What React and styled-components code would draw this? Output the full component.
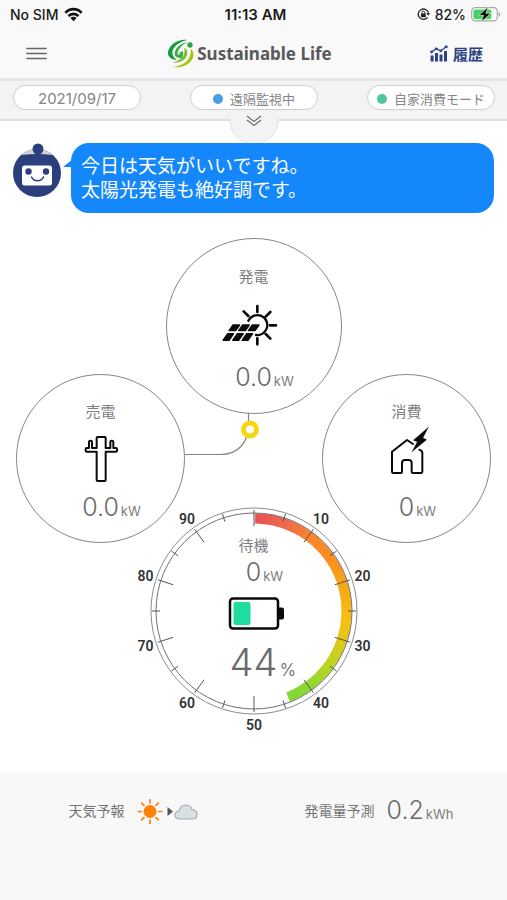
import React from "react";
import styled, { createGlobalStyle } from "styled-components";

const GlobalStyle = createGlobalStyle`
  *, *::before, *::after { box-sizing: border-box; }
  body {
    margin: 0;
    background: #fff;
    color: #6a6a6a;
    font-family: Inter, "Noto Sans CJK JP", sans-serif;
  }
  button { font: inherit; color: inherit; cursor: pointer; }
  svg { display: block; flex: none; }
`;

const Screen = styled.div`
  display: flex;
  flex-direction: column;
  min-height: 100vh;
`;

const StatusBar = styled.div`
  display: grid;
  grid-template-columns: 1fr auto 1fr;
  align-items: center;
  height: 28px;
  padding: 0 6px 0 10px;
  background: #f9f9f9;
  color: #1a1a1a;
  font-size: 14px;
  font-weight: 500;
`;

const StatusGroup = styled.div`
  display: flex;
  align-items: center;
  justify-content: ${(p) => (p.$end ? "flex-end" : "flex-start")};
  gap: ${(p) => (p.$end ? "5px" : "6px")};
`;

const Clock = styled.time`
  font-size: 15px;
  font-weight: 600;
`;

const Header = styled.header`
  display: grid;
  grid-template-columns: 1fr auto 1fr;
  align-items: center;
  height: 53px;
  padding: 0 24px 0 20px;
  background: #f9f9f9;
  border-bottom: 3px solid #e7e7e7;
`;

const MenuButton = styled.button`
  justify-self: start;
  padding: 6px;
  border: 0;
  background: none;
`;

const Brand = styled.h1`
  display: flex;
  align-items: center;
  gap: 3px;
  margin: 0;
  padding-right: 4px;
  color: #58595b;
  font-family: "Noto Sans", sans-serif;
  font-size: 17px;
  font-weight: 700;
  white-space: nowrap;
`;

const HistoryLink = styled.a`
  display: flex;
  align-items: center;
  justify-self: end;
  gap: 5px;
  color: #2d4283;
  font-size: 15px;
  font-weight: 700;
  text-decoration: none;
`;

const ModeBar = styled.div`
  position: relative;
  display: flex;
  justify-content: space-between;
  height: 40px;
  padding: 4px 12px 0 13px;
  background: #f3f3f3;
  border-bottom: 2px solid #dfdfdf;
`;

const Pill = styled.button`
  display: flex;
  align-items: center;
  justify-content: center;
  gap: 7px;
  width: 128px;
  height: 25px;
  padding: 2px 0 0;
  border: 1px solid #cfcfcf;
  border-radius: 13px;
  background: #fff;
  color: #858585;
  font-size: ${(p) => (p.$date ? "15px" : "13px")};
  font-weight: 400;
  white-space: nowrap;
`;

const Dot = styled.span`
  width: 10px;
  height: 10px;
  border-radius: 50%;
  background: ${(p) => p.$color};
`;

const Drawer = styled.button`
  position: absolute;
  top: 29px;
  left: 50%;
  transform: translateX(-50%);
  padding: 0;
  border: 0;
  background: none;
`;

const Chat = styled.section`
  display: flex;
  align-items: flex-start;
  padding: 22px 13px 0;
`;

const Bubble = styled.p`
  position: relative;
  flex: 1;
  min-height: 70px;
  margin: 0 0 0 10px;
  padding: 12px 10px 10px;
  border-radius: 18px;
  background: #1487fb;
  color: #fff;
  font-family: "Liberation Sans", "Noto Sans CJK JP", sans-serif;
  font-size: 19px;
  font-weight: 400;
  line-height: 24px;

  &::before {
    content: "";
    position: absolute;
    left: -8px;
    top: 16px;
    border-right: 10px solid #1487fb;
    border-top: 8px solid transparent;
  }
`;

const Diagram = styled.main`
  display: flex;
  flex-direction: column;
  align-items: center;
  padding: 25px 16px 36px;
`;

const Node = styled.section`
  display: flex;
  flex: none;
  flex-direction: column;
  align-items: center;
  justify-content: center;
  width: ${(p) => (p.$large ? "176px" : "169px")};
  height: ${(p) => (p.$large ? "176px" : "169px")};
  padding-top: 11px;
  border: 1px solid #858585;
  border-radius: 50%;
`;

const NodeTitle = styled.h2`
  margin: 0;
  color: #808080;
  font-size: 15px;
  font-weight: 400;
  line-height: 20px;
`;

const NodeIcon = styled.div`
  display: flex;
  align-items: center;
  height: 44px;
  margin: ${(p) => (p.$large ? "16px 0 14px" : "15px 0 10px")};
`;

const Reading = styled.p`
  display: grid;
  grid-template-columns: 1fr auto 1fr;
  align-items: baseline;
  width: 120px;
  margin: 0;
  font-size: ${(p) => (p.$big ? "38px" : "25px")};
  font-weight: 300;
  line-height: ${(p) => (p.$big ? "44px" : "32px")};
`;

const Amount = styled.span`
  grid-column: 2;
`;

const Unit = styled.span`
  padding-left: 2px;
  color: #7c7c7c;
  font-size: ${(p) => (p.$big ? "17px" : "13px")};
  font-weight: 400;
`;

const SideRow = styled.div`
  display: flex;
  align-self: stretch;
  justify-content: space-between;
  margin-top: -40px;
`;

const Link = styled.div`
  flex: 1;
`;

const Gauge = styled.section`
  display: grid;
  justify-items: center;
  margin-top: -57px;

  > * { grid-area: 1 / 1; }
`;

const GaugeContent = styled.div`
  display: flex;
  flex-direction: column;
  align-items: center;
  padding-top: 50px;

  svg { margin: 5px 0 10px; }
`;

const Forecast = styled.footer`
  display: flex;
  flex: 1;
  align-items: flex-start;
  justify-content: space-around;
  padding: 24px 0 0 15px;
  background: #f8f8f8;
`;

const ForecastItem = styled.section`
  display: flex;
  align-items: center;
  gap: 12px;
  height: 32px;
`;

const ForecastTitle = styled.h2`
  margin: 0;
  padding-bottom: 4px;
  color: #747474;
  font-size: 14px;
  font-weight: 400;
`;

const ForecastValue = styled.p`
  margin: 0;
  font-size: 25px;
  font-weight: 300;
  line-height: 32px;
`;

const CENTER = 125;
const at = (percent, r) => {
  const a = (percent / 100) * Math.PI * 2;
  return [CENTER + r * Math.sin(a), CENTER - r * Math.cos(a)];
};

const STOPS = [
  [0, [236, 80, 82]],
  [5, [238, 105, 76]],
  [10, [249, 134, 44]],
  [15, [251, 143, 34]],
  [20, [245, 168, 20]],
  [26, [251, 189, 18]],
  [30, [222, 201, 26]],
  [35, [182, 213, 34]],
  [40, [139, 216, 52]],
  [50, [110, 222, 66]],
];

const colorAt = (percent) => {
  const i = Math.max(1, STOPS.findIndex(([p]) => p >= percent));
  const [p0, c0] = STOPS[i - 1];
  const [p1, c1] = STOPS[i];
  const t = (percent - p0) / (p1 - p0);
  return `rgb(${c0.map((v, k) => Math.round(v + (c1[k] - v) * t)).join(",")})`;
};

function Dial({ level }) {
  const segments = Array.from({ length: level }, (_, i) => {
    const [x0, y0] = at(i === 0 ? 0.2 : i, 92.5);
    const [x1, y1] = at(Math.min(i + 1.3, level), 92.5);
    return <path key={i} d={`M${x0} ${y0}A92.5 92.5 0 0 1 ${x1} ${y1}`} stroke={colorAt(i)} />;
  });
  const ticks = Array.from({ length: 20 }, (_, i) => {
    const major = i % 2 === 0;
    const [x0, y0] = at(i * 5, major ? 101 : 102);
    const [x1, y1] = at(i * 5, major ? 85 : 94);
    return <line key={i} x1={x0} y1={y0} x2={x1} y2={y1} />;
  });
  const labels = [10, 20, 30, 40, 50, 60, 70, 80, 90].map((n) => {
    const [x, y] = at(n, 114);
    return <text key={n} x={x} y={y + 5}>{n}</text>;
  });
  return (
    <svg width="250" height="250" viewBox="0 0 250 250" role="img" aria-label={`${level}%`}>
      <g fill="none" strokeWidth="10">{segments}</g>
      <circle cx={CENTER} cy={CENTER} r="103" fill="none" stroke="#8c8c8c" />
      <circle cx={CENTER} cy={CENTER} r="98" fill="none" stroke="#707070" />
      <g stroke="#555">{ticks}</g>
      <g fill="#333" fontFamily="Roboto, sans-serif" fontSize="14" fontWeight="600" textAnchor="middle">{labels}</g>
    </svg>
  );
}

const WifiIcon = () => (
  <svg width="19" height="15" viewBox="0 0 19 15" fill="none" stroke="#111" strokeWidth="2.6">
    <path d="M1.4 5.8C6 .9 13 .9 17.6 5.8" />
    <path d="M4.5 9C7.4 6.1 11.6 6.1 14.5 9" />
    <path d="M9.5 14.2L6.4 11.1C8.2 9.4 10.8 9.4 12.6 11.1Z" fill="#111" stroke="none" />
  </svg>
);

const RotationLockIcon = () => (
  <svg width="13" height="14" viewBox="0 0 13 14" fill="none" stroke="#222">
    <path d="M10.6 10.4A5.2 5.2 0 1 1 11.4 5.6" strokeWidth="1.3" />
    <path d="M9.4 6h3.6L11.3 8.8Z" fill="#222" stroke="none" />
    <rect x="4" y="6.5" width="4.8" height="3.8" rx=".6" fill="#222" stroke="none" />
    <path d="M5 6.8V5.6a1.4 1.4 0 0 1 2.8 0v1.2" />
  </svg>
);

const ChargingIcon = () => (
  <svg width="30" height="17" viewBox="0 0 30 17">
    <rect x=".7" y="1.7" width="25.6" height="13.2" rx="3.6" fill="#fff" stroke="#a6a6a6" strokeWidth="1.2" />
    <rect x="2.4" y="3.4" width="18" height="9.8" rx="2.2" fill="#43d463" />
    <path d="M27.6 6v4.8c2.2-.7 2.2-4.1 0-4.8Z" fill="#a6a6a6" />
    <path d="M17.2 .8L8 9.3h4.7L10.2 16 19.8 7.3h-5Z" fill="#000" stroke="#f9f9f9" strokeWidth=".6" />
  </svg>
);

const MenuIcon = () => (
  <svg width="21" height="13" viewBox="0 0 21 13" stroke="#6b6464" strokeWidth="1.7" strokeLinecap="round">
    <path d="M1 1.5h19M1 6.5h19M1 11.5h19" />
  </svg>
);

const LogoIcon = () => (
  <svg width="27" height="29" viewBox="9 9 81 87">
    <path d="M70 12C44 8 17 24 12 48C10 61 21 71 38 72C28 64 23 55 26 44C31 29 46 18 70 12Z" fill="#169c49" />
    <path d="M71 17C50 22 34 35 32 51C31 63 42 68 53 65C57 61 58 54 57 45L45 51C47 53 48 56 45 57C39 56 40 48 44 41C50 31 59 23 71 17Z" fill="#38ad45" />
    <circle cx="78" cy="27" r="8" fill="#27a548" />
    <path d="M61 36C70 40 72 50 68 60C62 74 46 81 26 80C38 77 51 70 57 61C62 53 63 45 61 36Z" fill="#7dbd2b" />
    <path d="M80 38C92 47 91 66 78 79C66 91 48 97 27 92C49 91 67 81 75 66C80 56 81 47 80 38Z" fill="#a3c716" />
  </svg>
);

const ChartIcon = () => (
  <svg width="18" height="17" viewBox="0 0 18 17" fill="#2d4283">
    <path d="M.6 10.600h3v5.800h-3zM5 8h3v8.400H5zM9.500 9.600h3v6.800h-3zM14 6h3v10.400h-3z" />
    <path d="M1.2 7.2L6.4 3.6 10.6 6 16.4 1.6" fill="none" stroke="#2d4283" strokeWidth="1.3" />
    <circle cx="1.6" cy="7" r="1.4" /><circle cx="6.4" cy="3.8" r="1.4" />
    <circle cx="10.8" cy="5.8" r="1.4" /><circle cx="16.2" cy="1.8" r="1.5" />
  </svg>
);

const DrawerIcon = () => (
  <svg width="50" height="34" viewBox="0 0 50 34" fill="none">
    <path d="M1 9A24 24 0 0 0 49 9Z" fill="#f3f3f3" />
    <path d="M1 10A24 24 0 0 0 49 10" stroke="#dfdfdf" />
    <path d="M18 6L25 11.500 32 6M18 10L25 15.500 32 10" stroke="#6a6a6a" strokeWidth="1.1" />
  </svg>
);

const RobotIcon = () => (
  <svg width="48" height="55" viewBox="0 0 48 55">
    <circle cx="24" cy="30" r="24" fill="#2a3f7b" />
    <path d="M8 12A24 24 0 0 1 40 12Q24 10 8 12Z" fill="#d6d3d4" />
    <circle cx="25" cy="6" r="5.5" fill="#2a3f7b" />
    <path d="M23 9h4v7h-4z" fill="#2a3f7b" />
    <rect x="9" y="22.500" width="30" height="20" rx="2.5" fill="#fff" />
    <circle cx="15.500" cy="28.500" r="3.2" fill="#2a3f7b" />
    <circle cx="33" cy="28.500" r="3.2" fill="#2a3f7b" />
    <path d="M18.500 34C21 39 28 39 30.500 34" fill="none" stroke="#2a3f7b" strokeWidth="1.6" strokeLinecap="round" />
  </svg>
);

const SolarIcon = () => (
  <svg width="64" height="42" viewBox="186 224 192 126" fill="none" stroke="#0a0a0a" strokeLinecap="round">
    <path d="M265 274A30 30 0 1 1 288 317" strokeWidth="7" />
    <path d="M292 230v18M292 327v18M330 288h18M317 262L331 248M265 260L251 246M317 314L331 328" strokeWidth="8" />
    <g fill="#0a0a0a" strokeWidth="4" strokeLinejoin="round">
      <path d="M219 287H239L227 304H207ZM248 287H268L256 304H236ZM277 287H297L285 304H265Z" />
      <path d="M203 313H221L207 333H189ZM232 313H250L236 333H218ZM260 313H278L264 333H246Z" />
    </g>
  </svg>
);

const PoleIcon = () => (
  <svg width="36" height="48" viewBox="218 210 108 144" fill="none" stroke="#0a0a0a" strokeWidth="6" strokeLinejoin="round">
    <path d="M262 216H283Q286 216 286 219V249H300V231Q300 227 304 227H305Q309 227 309 231V249H317Q320 249 320 252V257Q320 260 317 260H286V345Q286 348 283 348H262Q259 348 259 345V260H229Q226 260 226 257V252Q226 249 229 249H236V231Q236 227 240 227H241Q245 227 245 231V249H259V219Q259 216 262 216Z" />
  </svg>
);

const HouseIcon = () => (
  <svg width="44" height="66" viewBox="226 182 132 198" fill="none" stroke="#0a0a0a" strokeWidth="6" strokeLinejoin="round" strokeLinecap="round">
    <path d="M310 236L292 224 247 259V319Q247 323 251 323H273Q277 323 277 319V293Q277 284 286 284H297Q306 284 306 293V319Q306 323 310 323H334Q338 323 338 319V262Q338 257 329 253" />
    <path d="M356 186L311 225 323 229 307 259 351 223 340 218Z" fill="#0a0a0a" stroke="#0a0a0a" strokeWidth="1" />
  </svg>
);

const BatteryIcon = () => (
  <svg width="60" height="33" viewBox="0 0 60 33">
    <rect x="6" y="1.500" width="48" height="30" rx="3" fill="#fff" stroke="#0a0a0a" strokeWidth="2.500" />
    <path d="M55 10.500h3q2 0 2 2v8q0 2-2 2h-3z" fill="#0a0a0a" />
    <rect x="9.500" y="5" width="17" height="23" rx="2" fill="#1edd9e" />
  </svg>
);

const ConnectorLine = () => (
  <svg width="76" height="84" viewBox="0 0 76 84" fill="none">
    <path d="M63.500 39V50C63.500 68 54 80.500 35 80.500H0" stroke="#858585" strokeWidth="1.200" />
    <circle cx="65" cy="55.500" r="6.500" fill="#fff" stroke="#f6d70f" strokeWidth="5" />
  </svg>
);

const SunCloudIcon = () => (
  <svg width="61" height="26" viewBox="0 0 61 26" role="img" aria-label="晴れのち曇り">
    <circle cx="13" cy="12.500" r="6.500" fill="#ff8206" />
    <path d="M13 .8v3M13 21.200v3M1.300 12.500h3M21.700 12.500h3M4.700 4.200l2.200 2.200M19.100 18.600l2.200 2.200M4.700 20.800l2.200-2.200M19.100 6.400l2.200-2.200" stroke="#ff8206" strokeWidth="1.700" strokeLinecap="round" />
    <path d="M30.500 8L36 12.500 30.500 17Z" fill="#555" />
    <path d="M42.500 20Q38 19.500 38 16Q38.200 12.500 42 12Q43.500 6 49 6Q53.500 6.200 55 10.500Q60 11 60 15.500Q59.500 19.800 56 20Z" fill="#d9e0e4" stroke="#a5aaad" strokeWidth="1.200" />
  </svg>
);

function Measure({ value, unit, big }) {
  return (
    <Reading $big={big}>
      <Amount>{value}</Amount>
      <Unit $big={big}>{unit}</Unit>
    </Reading>
  );
}

function EnergyNode({ title, value, large, children }) {
  return (
    <Node $large={large}>
      <NodeTitle>{title}</NodeTitle>
      <NodeIcon $large={large}>{children}</NodeIcon>
      <Measure value={value} unit="kW" />
    </Node>
  );
}

export default function App() {
  return (
    <Screen lang="ja">
      <GlobalStyle />
      <StatusBar>
        <StatusGroup>No SIM <WifiIcon /></StatusGroup>
        <Clock>11:13 AM</Clock>
        <StatusGroup $end><RotationLockIcon />82% <ChargingIcon /></StatusGroup>
      </StatusBar>
      <Header>
        <MenuButton aria-label="メニュー"><MenuIcon /></MenuButton>
        <Brand><LogoIcon />Sustainable Life</Brand>
        <HistoryLink href="#history"><ChartIcon />履歴</HistoryLink>
      </Header>
      <ModeBar>
        <Pill $date>2021/09/17</Pill>
        <Pill><Dot $color="#439fe6" />遠隔監視中</Pill>
        <Pill><Dot $color="#4dc79d" />自家消費モード</Pill>
        <Drawer aria-label="開く"><DrawerIcon /></Drawer>
      </ModeBar>
      <Chat>
        <RobotIcon />
        <Bubble>今日は天気がいいですね。<br />太陽光発電も絶好調です。</Bubble>
      </Chat>
      <Diagram>
        <EnergyNode title="発電" value="0.0" large><SolarIcon /></EnergyNode>
        <SideRow>
          <EnergyNode title="売電" value="0.0"><PoleIcon /></EnergyNode>
          <Link><ConnectorLine /></Link>
          <EnergyNode title="消費" value="0"><HouseIcon /></EnergyNode>
        </SideRow>
        <Gauge>
          <Dial level={44} />
          <GaugeContent>
            <NodeTitle>待機</NodeTitle>
            <Measure value="0" unit="kW" />
            <BatteryIcon />
            <Measure value="44" unit="%" big />
          </GaugeContent>
        </Gauge>
      </Diagram>
      <Forecast>
        <ForecastItem>
          <ForecastTitle>天気予報</ForecastTitle>
          <SunCloudIcon />
        </ForecastItem>
        <ForecastItem>
          <ForecastTitle>発電量予測</ForecastTitle>
          <ForecastValue>0.2<Unit>kWh</Unit></ForecastValue>
        </ForecastItem>
      </Forecast>
    </Screen>
  );
}
